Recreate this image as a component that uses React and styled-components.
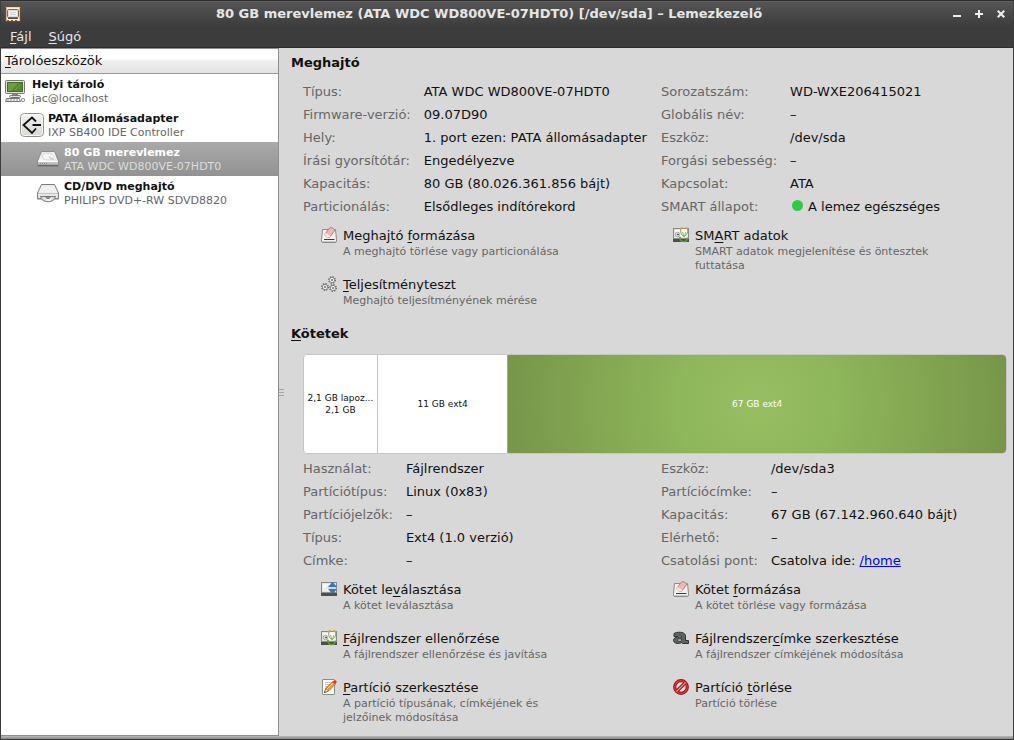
import styled, { createGlobalStyle } from 'styled-components';

const GlobalStyle = createGlobalStyle`
  * {
    box-sizing: border-box;
  }

  body {
    margin: 0;
    background-color: #3c3c3c;
    color: #111;
    font-family: "DejaVu Sans", sans-serif;
    font-size: 13px;
    line-height: 18px;
  }

  button {
    margin: 0;
    padding: 0;
    border: none;
    background: none;
    color: inherit;
    font: inherit;
    text-align: left;
  }

  u {
    text-decoration-thickness: 1px;
    text-underline-offset: 2px;
  }
`;

/* ---------- icons ---------- */

const AppIcon = () => (
  <svg width="16" height="16" viewBox="0 0 16 16">
    <rect x="0.5" y="0.5" width="15" height="15" rx="1" fill="#dfb98a" stroke="#6d4a2a" />
    <rect x="2" y="1.5" width="12" height="13" fill="#fff3df" />
    <rect x="2.5" y="3.5" width="11" height="8" rx="1" fill="#d9d9d9" stroke="#6d6d6d" />
    <rect x="4" y="5" width="8" height="5" fill="#f4f4f4" />
    <path d="M5 6.5h6M5 8.5h6" stroke="#d2d2d2" />
    <path d="M3 12.5h10" stroke="#4b4b4b" />
    <path d="M2 14.5h2M6 14.5h2M10 14.5h2" stroke="#8a5a2e" />
  </svg>
);

const ComputerIcon = () => (
  <svg width="24" height="24" viewBox="0 0 24 24">
    <rect x="1.5" y="1.5" width="19" height="13" rx="1" fill="#e3e3df" stroke="#777773" />
    <rect x="3.5" y="3.5" width="15" height="9" fill="#568a2f" stroke="#42692a" />
    <path d="M4 4h10l-7 8H4z" fill="#6c9f3d" />
    <path d="M11 11l5-5" stroke="#7fae52" strokeWidth="0.7" />
    <path d="M8 15h6v2H8z" fill="#888" />
    <rect x="5.5" y="16.5" width="11" height="2" rx="1" fill="#ddd" stroke="#777" />
    <path d="M2.5 19.5h13l1 3h-15z" fill="#ededeb" stroke="#777" />
    <path d="M3 21h12" stroke="#999" strokeDasharray="2 1" />
    <rect x="17.5" y="19.5" width="3" height="3" rx="1" fill="#eee" stroke="#777" />
  </svg>
);

const AdapterIcon = () => (
  <svg width="24" height="24" viewBox="0 0 24 24">
    <defs>
      <linearGradient id="adapter" x1="0" y1="0" x2="0" y2="1">
        <stop offset="0" stopColor="#f3f4f2" />
        <stop offset="1" stopColor="#d5d7d2" />
      </linearGradient>
    </defs>
    <rect x="0.5" y="0.5" width="23" height="23" rx="4" fill="url(#adapter)" stroke="#8f918c" />
    <rect x="1.5" y="1.5" width="21" height="21" rx="3" fill="none" stroke="#fff" strokeOpacity="0.8" />
    <path d="M16 8.5L12 4.5 3.5 12l8.5 8 4-4.5M12.5 12H21" fill="none" stroke="#111" strokeWidth="1.8" />
  </svg>
);

const HardDiskIcon = () => (
  <svg width="24" height="24" viewBox="0 0 24 24">
    <defs>
      <linearGradient id="disk" x1="0" y1="0" x2="1" y2="1">
        <stop offset="0" stopColor="#dededc" />
        <stop offset="0.5" stopColor="#fafafa" />
        <stop offset="1" stopColor="#d5d5d3" />
      </linearGradient>
    </defs>
    <path d="M5.5 4.5h13L22.5 14v5h-21v-5z" fill="url(#disk)" stroke="#8a8a88" />
    <ellipse cx="12" cy="9.5" rx="6" ry="3.5" fill="#f4f4f4" stroke="#d4d4d2" />
    <path d="M13 10l5 3" stroke="#bbb" />
    <path d="M2 14.5h20v4H2z" fill="#c0c0be" />
    <path d="M2 14.5h20" stroke="#fff" />
    <path d="M2 18.5h20" stroke="#666" strokeWidth="1.5" />
    <path d="M4 16.5h8" stroke="#888" strokeDasharray="1 1" />
  </svg>
);

const OpticalIcon = () => (
  <svg width="24" height="24" viewBox="0 0 24 24">
    <path d="M5.5 3.5h13L22.5 12v6h-21v-6z" fill="#e6e6e4" stroke="#7d7d7b" />
    <path d="M6 4.5h12l3 7H3z" fill="#f1f1f0" />
    <path d="M2 12.5h20" stroke="#c4c4c4" />
    <path d="M2 17.5h20" stroke="#8b8b89" />
    <path d="M4.5 15.5c1 7 14 7 15 0z" fill="#dadad8" stroke="#7b7b79" />
    <path d="M8 16l3 4h3l2-4z" fill="#fff" fillOpacity="0.8" />
    <ellipse cx="12" cy="16.5" rx="2" ry="1" fill="#aaa" stroke="#666" />
  </svg>
);

const EraserIcon = () => (
  <svg width="16" height="16" viewBox="0 0 16 16">
    <path d="M1.5 2.5h13l1 10v1.5q0 1.5-1.5 1.5H2Q.5 15.5.5 14v-1.5z" fill="#f1f1ef" stroke="#898b87" />
    <path d="M1.5 14.5h13" stroke="#c6c8c3" />
    <path d="M3 12.5h10.5" stroke="#3a3a3a" />
    <path d="M3.5 7.5L9 .5q3 0 5 2.5L8.5 10.5q-3.5 0-5-3z" fill="#f0b9b5" stroke="#b57d7a" />
    <path d="M3.5 7.5L4.7 6q2 2.5 5 2.8L8.5 10.5q-3.5 0-5-3z" fill="#fdebea" />
  </svg>
);

const Gear = ({ x, y }) => (
  <g transform={`translate(${x} ${y})`}>
    <circle r="3.2" fill="none" stroke="#5c5e5a" strokeWidth="1.4" strokeDasharray="1.3 1.21" />
    <circle r="2.6" fill="#fff" stroke="#666864" strokeWidth="0.7" />
    <circle r="0.8" fill="#fff" stroke="#555753" strokeWidth="0.8" />
  </g>
);

const GearsIcon = () => (
  <svg width="16" height="16" viewBox="0 0 16 16">
    <Gear x={11} y={4} />
    <Gear x={4} y={11} />
    <Gear x={12} y={12} />
  </svg>
);

const DriveBase = () => (
  <>
    <rect x="0.5" y="1.5" width="15" height="13" fill="#e4e5e2" stroke="#888a85" />
    <path d="M2 3h12v7H2z" fill="#f8f8f7" />
    <rect x="0" y="12" width="16" height="3" fill="#4b4f4e" />
    <path d="M1 11.5h14" stroke="#8d918f" />
  </>
);

const CheckDriveIcon = () => (
  <svg width="16" height="16" viewBox="0 0 16 16">
    <DriveBase />
    <circle cx="4.5" cy="7.5" r="2.3" fill="#d4d6d2" stroke="#aaa" />
    <path d="M4 7.5h2" stroke="#555" />
    <path d="M8 2c-1 3 .5 6 3 8 2.5-2 4.5-5 3.5-8" fill="#f6faf0" stroke="#84907a" />
    <path d="M7.5 1.5L10 .5M12.5.5l2.5 1" stroke="#eaa02c" strokeWidth="1.5" />
    <path d="M9.5 5l1.5 5L13 5" fill="none" stroke="#8dbb61" />
    <path d="M7 10.5c0 5.5 7 5.5 7.5 0" fill="none" stroke="#62a621" strokeWidth="1.3" />
    <circle cx="7" cy="10.5" r="1" fill="#62a621" />
  </svg>
);

const UnmountIcon = () => (
  <svg width="16" height="16" viewBox="0 0 16 16">
    <DriveBase />
    <path d="M3 9c2-1 4-3 5-5" fill="none" stroke="#d2d4d0" />
    <path d="M11.5 1l4 5h-8zM11.5 13l4-5h-8z" fill="#3978bd" stroke="#2b65a8" strokeWidth="0.5" />
    <path d="M7.5 7h8" stroke="#d5e5f5" />
  </svg>
);

const EditIcon = () => (
  <svg width="16" height="16" viewBox="0 0 16 16">
    <rect x="1.5" y="0.5" width="12" height="15" rx="0.5" fill="#fbfbfa" stroke="#8a8c87" />
    <path d="M4 3.5h6M4 5.5h5M4 7.5h3M4 9.5h2" stroke="#c4c6c2" />
    <path d="M3.5 13.5L5 9l7-6.500 2.500 2.500-7 7z" fill="#f39a38" stroke="#9b5b17" strokeWidth="0.8" />
    <path d="M6 10l6-6" stroke="#fdcb8d" />
    <path d="M3.5 13.5l1.500-4L7.500 12z" fill="#f1dfb8" stroke="#775c2a" strokeWidth="0.6" />
    <path d="M3 14l1.500-.8-.7-.9z" fill="#222" />
    <path d="M11.5 3L13 1.500c1.500-.5 3 .5 2.500 2L14 5z" fill="#e4303c" />
  </svg>
);

const LabelIcon = () => (
  <svg width="16" height="16" viewBox="0 0 16 16">
    <path
      fillRule="evenodd"
      d="M1 6.5V3.5C3 2 11.5 1 12.5 5.5V10.5H15.5V13.5H9.5L9 12.3C7 14 .5 14.3.5 10.3.5 7 5 6.8 8.5 7V6C8 4.800 5.500 5 5 6.5zM8.5 9C4.800 8.700 4.300 9.500 4.300 10.300S7.500 12 8.500 10.500z"
      fill="#5f6462"
      stroke="#2e3436"
    />
  </svg>
);

const DeleteIcon = () => (
  <svg width="16" height="16" viewBox="0 0 16 16">
    <circle cx="8" cy="8" r="6.3" fill="#e8dfdf" stroke="#9c1216" strokeWidth="3.2" />
    <path d="M4 12l8-8" stroke="#9c1216" strokeWidth="3.4" />
    <circle cx="8" cy="8" r="6.3" fill="none" stroke="#d8383c" strokeWidth="1.2" />
    <path d="M3.5 12.5l9-9" stroke="#e8898b" strokeWidth="1.2" />
  </svg>
);

/* ---------- data ---------- */

const devices = [
  { name: 'Helyi tároló', detail: 'jac@localhost', level: 0, icon: <ComputerIcon /> },
  { name: 'PATA állomásadapter', detail: 'IXP SB400 IDE Controller', level: 1, icon: <AdapterIcon /> },
  { name: '80 GB merevlemez', detail: 'ATA WDC WD800VE-07HDT0', level: 2, icon: <HardDiskIcon />, selected: true },
  { name: 'CD/DVD meghajtó', detail: 'PHILIPS DVD+-RW SDVD8820', level: 2, icon: <OpticalIcon /> },
];

const driveLeft = [
  ['Típus:', 'ATA WDC WD800VE-07HDT0'],
  ['Firmware-verzió:', '09.07D90'],
  ['Hely:', '1. port ezen: PATA állomásadapter'],
  ['Írási gyorsítótár:', 'Engedélyezve'],
  ['Kapacitás:', '80 GB (80.026.361.856 bájt)'],
  ['Particionálás:', 'Elsődleges indítórekord'],
];

const volumeLeft = [
  ['Használat:', 'Fájlrendszer'],
  ['Partíciótípus:', 'Linux (0x83)'],
  ['Partíciójelzők:', '–'],
  ['Típus:', 'Ext4 (1.0 verzió)'],
  ['Címke:', '–'],
];

const driveActions = [
  { title: <>Meghajtó <u>f</u>ormázása</>, text: 'A meghajtó törlése vagy particionálása', icon: <EraserIcon /> },
  { title: <>SM<u>A</u>RT adatok</>, text: 'SMART adatok megjelenítése és öntesztek futtatása', icon: <CheckDriveIcon /> },
  { title: <><u>T</u>eljesítményteszt</>, text: 'Meghajtó teljesítményének mérése', icon: <GearsIcon /> },
];

const volumeActions = [
  { title: <>Kötet le<u>v</u>álasztása</>, text: 'A kötet leválasztása', icon: <UnmountIcon /> },
  { title: <>Kötet <u>f</u>ormázása</>, text: 'A kötet törlése vagy formázása', icon: <EraserIcon /> },
  { title: <><u>F</u>ájlrendszer ellenőrzése</>, text: 'A fájlrendszer ellenőrzése és javítása', icon: <CheckDriveIcon /> },
  { title: <>Fájlrendszer<u>c</u>ímke szerkesztése</>, text: 'A fájlrendszer címkéjének módosítása', icon: <LabelIcon /> },
  { title: <><u>P</u>artíció szerkesztése</>, text: 'A partíció típusának, címkéjének és jelzőinek módosítása', icon: <EditIcon /> },
  { title: <>Partíció <u>t</u>örlése</>, text: 'Partíció törlése', icon: <DeleteIcon /> },
];

/* ---------- parts ---------- */

const Info = ({ rows }) => (
  <InfoList>
    {rows.map(([label, value]) => (
      <InfoRow key={label}>
        <dt>{label}</dt>
        <dd>{value}</dd>
      </InfoRow>
    ))}
  </InfoList>
);

const Actions = ({ items }) => (
  <ActionGrid>
    {items.map(({ title, text, icon }) => (
      <Action key={text} type="button">
        {icon}
        <ActionText>
          {title}
          <Small>{text}</Small>
        </ActionText>
      </Action>
    ))}
  </ActionGrid>
);

const App = () => {
  const driveRight = [
    ['Sorozatszám:', 'WD-WXE206415021'],
    ['Globális név:', '–'],
    ['Eszköz:', '/dev/sda'],
    ['Forgási sebesség:', '–'],
    ['Kapcsolat:', 'ATA'],
    ['SMART állapot:', <Status key="status">A lemez egészséges</Status>],
  ];

  const volumeRight = [
    ['Eszköz:', '/dev/sda3'],
    ['Partíciócímke:', '–'],
    ['Kapacitás:', '67 GB (67.142.960.640 bájt)'],
    ['Elérhető:', '–'],
    ['Csatolási pont:', <>Csatolva ide: <Link href="#home">/home</Link></>],
  ];

  return (
    <>
      <GlobalStyle />
      <Window>
        <TitleBar>
          <AppIcon />
          <Title>80 GB merevlemez (ATA WDC WD800VE-07HDT0) [/dev/sda] – Lemezkezelő</Title>
          <WindowButtons>
            <button type="button" aria-label="Minimalizálás">
              <svg width="8" height="10" viewBox="0 0 8 10"><path d="M0 7h8" stroke="#eee" strokeWidth="2" /></svg>
            </button>
            <button type="button" aria-label="Maximalizálás">
              <svg width="8" height="10" viewBox="0 0 8 10"><path d="M0 5h8M4 1v8" stroke="#eee" strokeWidth="2" /></svg>
            </button>
            <button type="button" aria-label="Bezárás">
              <svg width="8" height="10" viewBox="0 0 8 10"><path d="M.7 1.7l6.6 6.6M7.3 1.7L.7 8.3" stroke="#eee" strokeWidth="2.2" /></svg>
            </button>
          </WindowButtons>
        </TitleBar>
        <MenuBar>
          <button type="button"><u>F</u>ájl</button>
          <button type="button"><u>S</u>úgó</button>
        </MenuBar>
        <Body>
          <Sidebar>
            <SidebarHeader><u>T</u>árolóeszközök</SidebarHeader>
            {devices.map((device) => (
              <Device key={device.name} type="button" $level={device.level} $selected={device.selected}>
                {device.icon}
                <DeviceText>
                  <strong>{device.name}</strong>
                  <Small>{device.detail}</Small>
                </DeviceText>
              </Device>
            ))}
          </Sidebar>
          <Handle>
            <svg width="5" height="9" viewBox="0 0 5 9"><path d="M0 1.5h5M0 4.5h5M0 7.5h5" stroke="#a5a5a5" /></svg>
          </Handle>
          <Content>
            <Heading>Meghajtó</Heading>
            <Section>
              <Columns>
                <Info rows={driveLeft} />
                <Info rows={driveRight} />
              </Columns>
              <Actions items={driveActions} />
            </Section>
            <Heading><u>K</u>ötetek</Heading>
            <Section>
              <Volumes>
                <Volume type="button" $size={73}>2,1 GB lapoz...<br />2,1 GB</Volume>
                <Volume type="button" $size={130}>11 GB ext4</Volume>
                <Volume type="button" $size={499} $selected>67 GB ext4</Volume>
              </Volumes>
              <Columns>
                <Info rows={volumeLeft} />
                <Info rows={volumeRight} />
              </Columns>
              <Actions items={volumeActions} />
            </Section>
          </Content>
        </Body>
      </Window>
    </>
  );
};

export default App;

const Window = styled.div`
  display: flex;
  flex-direction: column;
  min-height: 100vh;
  border: 1px solid #3c3c3c;
  border-top-color: #2c2c2c;
  background: linear-gradient(#6a6a6a, #555 1px, #3c3c3c 26px);
`;

const TitleBar = styled.header`
  display: flex;
  align-items: center;
  height: 25px;
  padding: 0 8px 0 4px;
  color: #e6e6e6;
`;

const Title = styled.h1`
  flex: 1;
  margin: 0;
  padding-left: 4px;
  font-size: 13px;
  text-align: center;
`;

const WindowButtons = styled.div`
  display: flex;
  gap: 14px;

  svg {
    display: block;
  }
`;

const MenuBar = styled.nav`
  display: flex;
  gap: 17px;
  height: 22px;
  padding: 1px 9px;
  border-bottom: 1px solid #2f2b2f;
  color: #e6e6e6;
`;

const Body = styled.div`
  display: flex;
  flex: 1;
  padding-bottom: 3px;
  background: linear-gradient(to top, #888, #bbb 3px, #d8d8d8 3px);
`;

const Sidebar = styled.aside`
  flex: 0 0 278px;
  border: 1px solid #8f8f8f;
  border-left: none;
  background-color: #fff;
`;

const SidebarHeader = styled.div`
  height: 25px;
  padding: 3px 4px;
  border-bottom: 1px solid #9a9a9a;
  background: linear-gradient(#fff 40%, #f0f0f0 50%, #e3e3e3);
`;

const Small = styled.span`
  display: block;
  color: #666;
  font-size: 11px;
  line-height: 14px;
`;

const Device = styled.button`
  display: flex;
  align-items: center;
  gap: 4px;
  width: 100%;
  height: 34px;
  padding-left: ${({ $level }) => [3, 19, 35][$level]}px;
  background: ${({ $selected }) => ($selected ? 'linear-gradient(#aaa, #929292)' : 'none')};
  color: ${({ $selected }) => ($selected ? '#fff' : '#111')};

  ${Small} {
    color: ${({ $selected }) => ($selected ? '#ddd' : '#666')};
  }
`;

const DeviceText = styled.span`
  padding-top: 2px;
  font-size: 11px;
  line-height: 14px;
`;

const Handle = styled.div`
  display: flex;
  align-items: center;
  width: 12px;
`;

const Content = styled.main`
  flex: 1;
  min-width: 0;
  padding: 3px 6px 0 0;
`;

const Heading = styled.h2`
  margin: 0;
  font-size: 13px;
  line-height: 23px;
`;

const Section = styled.section`
  padding: 6px 0 0 12px;
`;

const Columns = styled.div`
  display: grid;
  grid-template-columns: 1fr 1fr;
  column-gap: 12px;
`;

const InfoList = styled.dl`
  display: grid;
  grid-template-columns: max-content 1fr;
  column-gap: 13px;
  margin: 0;
  line-height: 23px;
  white-space: nowrap;
`;

const InfoRow = styled.div`
  display: contents;

  dt {
    color: #666;
  }

  dd {
    margin: 0;
  }
`;

const Status = styled.span`
  &::before {
    content: "";
    display: inline-block;
    width: 11px;
    height: 11px;
    margin: 0 5px 0 2px;
    border-radius: 50%;
    background-color: #2ecc40;
  }
`;

const Link = styled.a`
  color: #0000ee;
`;

const ActionGrid = styled.div`
  display: grid;
  grid-template-columns: 1fr 1fr;
  grid-auto-rows: 46px;
  row-gap: 3px;
  padding-top: 9px;
`;

const Action = styled.button`
  display: flex;
  align-items: flex-start;
  gap: 6px;
  padding-left: 18px;
`;

const ActionText = styled.span`
  max-width: 240px;
`;

const Volumes = styled.div`
  display: flex;
  height: 100px;
  margin: 3px 0;
  border: 1px solid #c6c6c6;
  border-radius: 5px;
  overflow: hidden;
`;

const Volume = styled.button`
  flex: ${({ $size }) => $size} 1 0;
  min-width: 0;
  background: ${({ $selected }) => ($selected ? 'radial-gradient(circle, #98be62, #8eb65a 80px, #77964a 250px)' : '#fff')};
  color: ${({ $selected }) => ($selected ? '#fff' : '#111')};
  font-size: 9px;
  line-height: 12px;
  text-align: center;
  white-space: nowrap;

  &:not(:first-child) {
    border-left: 1px solid ${({ $selected }) => ($selected ? '#9bad80' : '#c6c6c6')};
  }
`;
